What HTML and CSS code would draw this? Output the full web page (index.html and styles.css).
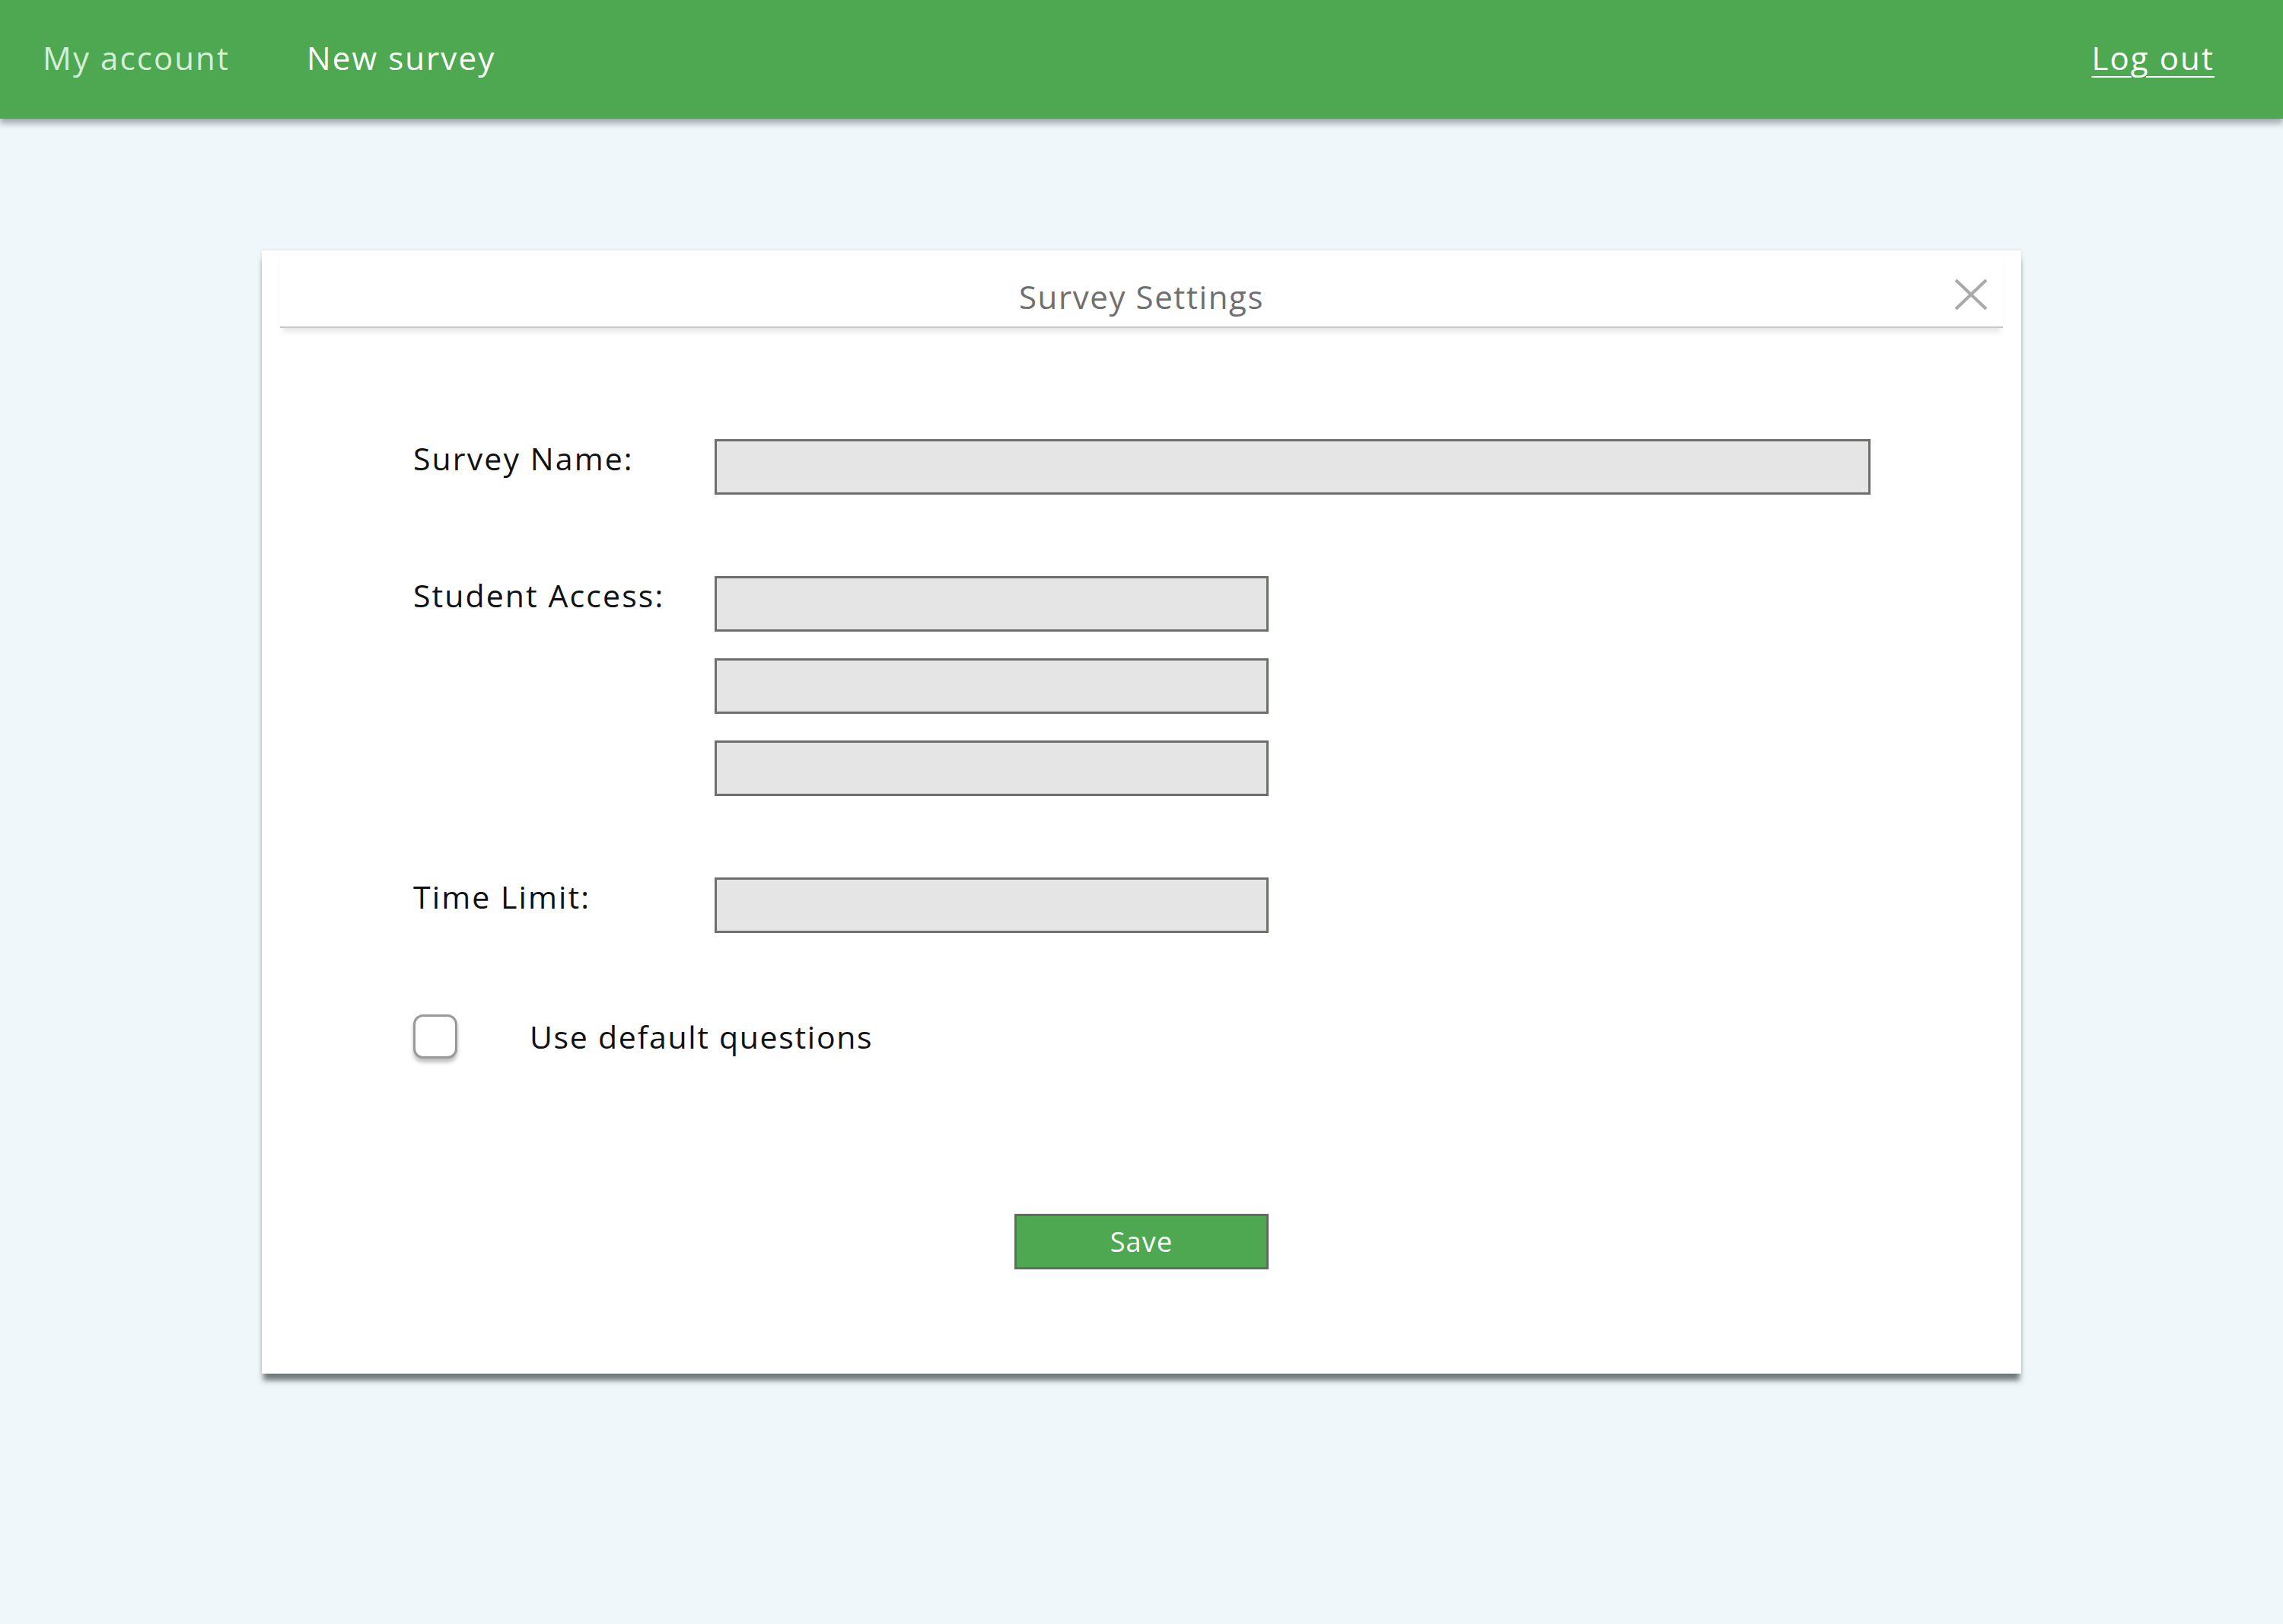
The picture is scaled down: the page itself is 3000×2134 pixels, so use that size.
FILE: index.html
```html
<!DOCTYPE html>
<html lang="en">
<head>
<meta charset="utf-8">
<title>Survey Settings</title>
<link rel="stylesheet" href="styles.css">
</head>
<body>
<header class="topbar">
  <nav class="nav-left">
    <a class="nav-link nav-muted" href="#">My account</a>
    <a class="nav-link" href="#">New survey</a>
  </nav>
  <a class="logout" href="#">Log out</a>
</header>
<main class="page">
  <section class="card">
    <div class="card-head">
      <span class="head-spacer"></span>
      <h1 class="card-title">Survey Settings</h1>
      <button class="close" type="button" aria-label="Close">
        <svg width="46" height="42" viewBox="0 0 46 42"><path d="M3 2 L43 40 M43 2 L3 40" stroke="#a9a9a9" stroke-width="4" fill="none"/></svg>
      </button>
    </div>
    <form class="form">
      <div class="row">
        <label class="label">Survey Name:</label>
        <div class="fields"><div class="input input-wide"></div></div>
      </div>
      <div class="row">
        <label class="label">Student Access:</label>
        <div class="fields">
          <div class="input input-narrow"></div>
          <div class="input input-narrow"></div>
          <div class="input input-narrow"></div>
        </div>
      </div>
      <div class="row">
        <label class="label">Time Limit:</label>
        <div class="fields"><div class="input input-narrow"></div></div>
      </div>
      <div class="check-row">
        <span class="checkbox"></span>
        <span class="check-label">Use default questions</span>
      </div>
      <div class="actions">
        <button class="save" type="button">Save</button>
      </div>
    </form>
  </section>
</main>
</body>
</html>
```
FILE: styles.css
```css
* { box-sizing: border-box; }
html, body { margin: 0; padding: 0; }
body {
  background: #eff7fa;
  font-family: "Open Sans", "Liberation Sans", sans-serif;
  width: 3000px;
  min-height: 2134px;
}
.topbar {
  height: 156px;
  background: #4da851;
  display: flex;
  align-items: center;
  justify-content: space-between;
  padding: 0 90px 4px 56px;
  box-shadow: 0 6px 8px rgba(60, 70, 72, 0.45);
  position: relative;
  z-index: 2;
}
.nav-left { display: flex; gap: 101px; }
.nav-link, .logout {
  font-size: 42px;
  color: #ffffff;
  text-decoration: none;
  letter-spacing: 2.1px;
  line-height: 1;
}
.nav-muted { color: #d6eed6; }
.logout { text-decoration: underline; text-underline-offset: 8px; text-decoration-thickness: 2px; }
.page { padding-top: 173px; display: flex; justify-content: center; }
.card {
  width: 2312px;
  background: #ffffff;
  padding: 0 24px 137px;
  box-shadow: 0 11px 7px -2px rgba(70, 80, 82, 0.75), 0 0 4px rgba(0, 0, 0, 0.12);
}
.card-head {
  height: 102px;
  display: grid;
  grid-template-columns: 1fr auto 1fr;
  align-items: start;
  border-bottom: 2px solid #c8c8c8;
  box-shadow: 0 8px 7px -3px rgba(0, 0, 0, 0.1);
}
.card-title {
  margin: 0;
  padding-top: 37px;
  font-size: 42px;
  line-height: 48px;
  font-weight: 400;
  color: #6f6f6f;
  letter-spacing: 1.6px;
}
.close {
  justify-self: end;
  margin: 37px 19px 0 0;
  padding: 0;
  border: 0;
  background: none;
  width: 46px;
  height: 42px;
}
.close svg { display: block; }
.form {
  padding: 146px 0 0 175px;
  display: flex;
  flex-direction: column;
}
.row {
  display: grid;
  grid-template-columns: 396px 1fr;
  margin-bottom: 107px;
}
.label {
  font-size: 41px;
  line-height: 44px;
  padding-top: 3px;
  color: #111;
  letter-spacing: 2.1px;
}
.fields { display: flex; flex-direction: column; gap: 35px; }
.input {
  height: 73px;
  background: #e5e5e5;
  border: 3px solid #6b7168;
}
.input-wide { width: 1519px; }
.input-narrow { width: 728px; }
.check-row {
  display: flex;
  align-items: center;
  gap: 95px;
  height: 58px;
}
.checkbox {
  width: 58px;
  height: 58px;
  border: 3px solid #999;
  border-radius: 13px;
  background: #fff;
  box-shadow: 0 5px 5px rgba(0, 0, 0, 0.25);
}
.check-label {
  font-size: 41px;
  color: #111;
  letter-spacing: 1.7px;
}
.actions {
  margin-top: 204px;
  margin-left: -175px;
  display: flex;
  justify-content: center;
}
.save {
  width: 334px;
  height: 73px;
  background: #4da851;
  border: 3px solid #5f6e5f;
  color: #ffffff;
  font-family: "Open Sans", "Liberation Sans", sans-serif;
  font-size: 36px;
  letter-spacing: 1.2px;
  padding: 0;
}
```
